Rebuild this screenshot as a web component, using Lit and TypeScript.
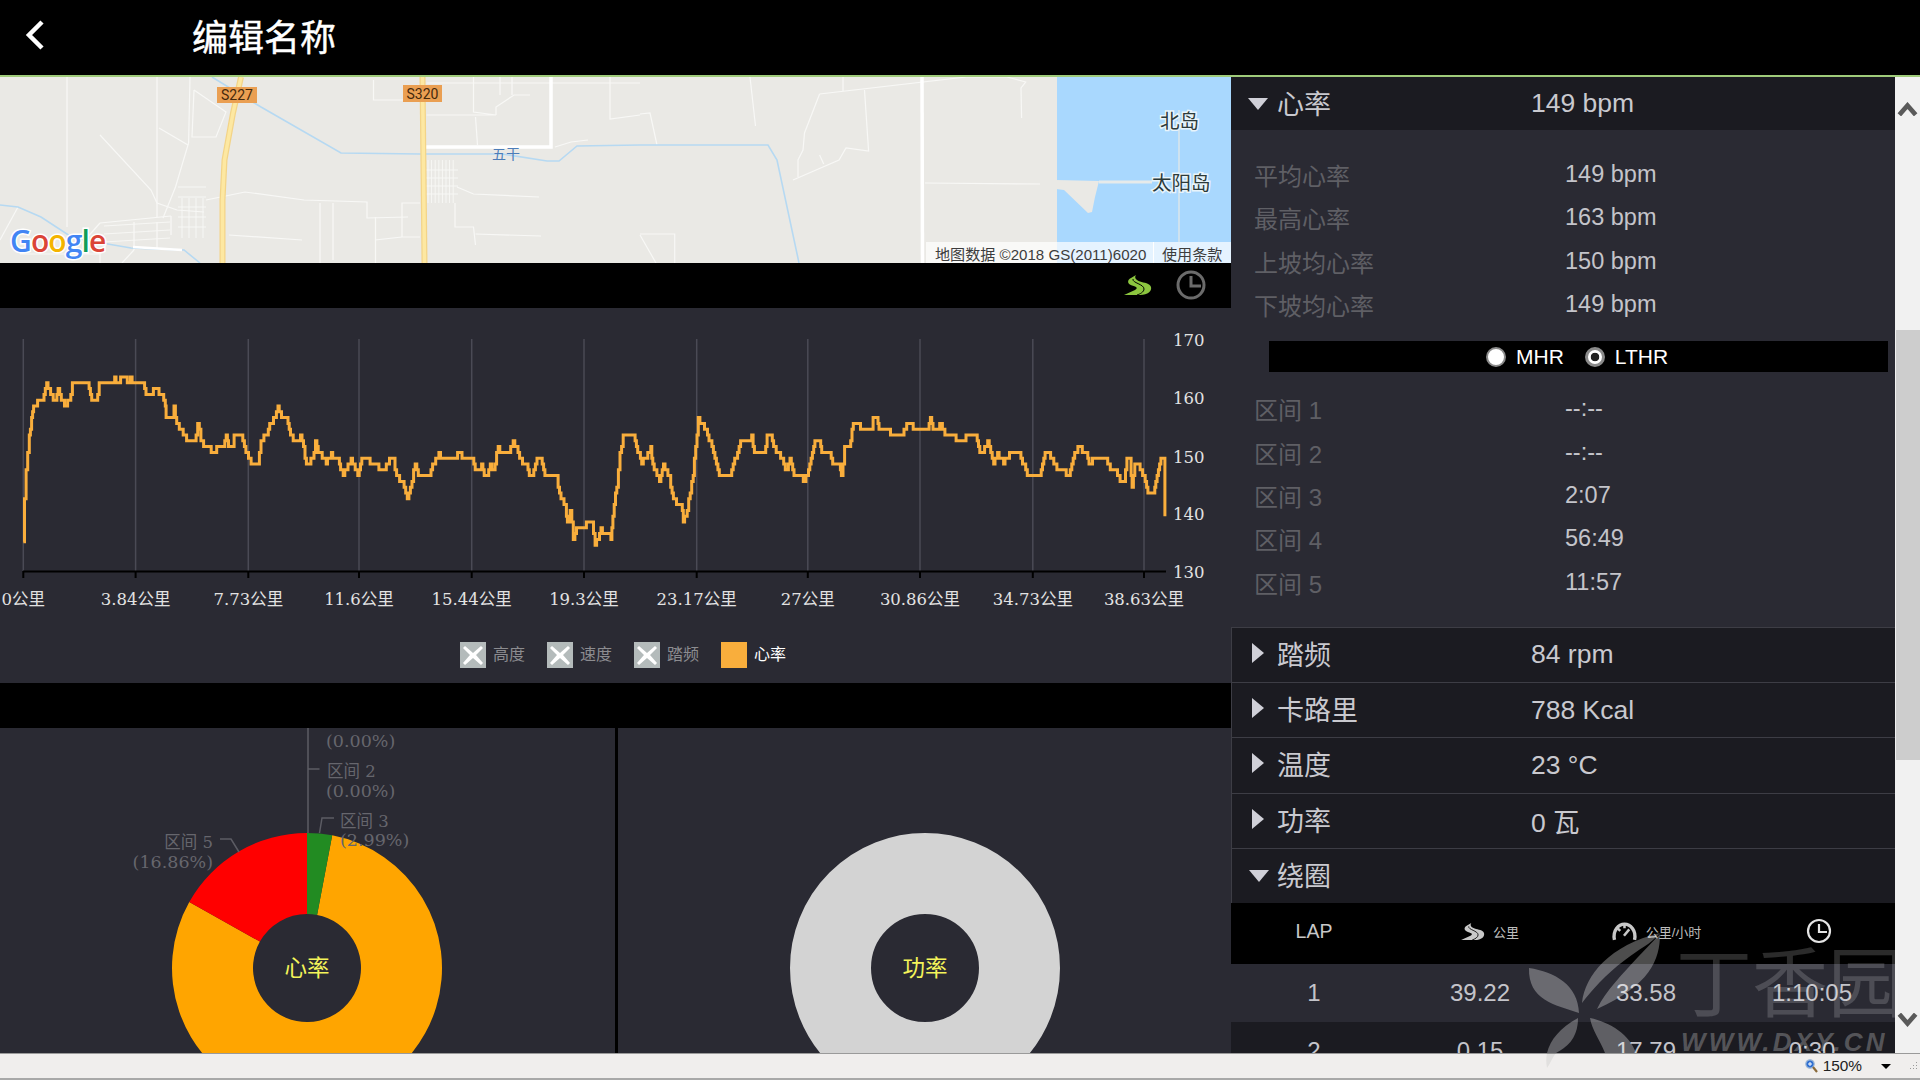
import { LitElement, html, css, svg } from 'lit';
import { customElement } from 'lit/decorators.js';

type Pt = [number, number];

// heart rate trace, read off the reference (left half and right half of the chart)
const traceLeft: Pt[] = [[59,695],[62,560],[66,480],[70,420],[74,370],[80,330],[85,295],[95,275],[108,265],[118,225],[128,250],[138,278],[147,242],[155,265],[163,290],[175,270],[183,225],[222,225],[232,278],[243,278],[251,225],[285,225],[290,208],[300,225],[305,208],[320,208],[322,225],[330,208],[338,225],[362,225],[373,260],[385,258],[388,242],[398,242],[402,260],[410,260],[418,290],[420,315],[438,315],[440,295],[447,340],[460,362],[470,375],[472,400],[492,400],[500,345],[508,385],[515,415],[530,415],[538,435],[548,412],[565,412],[572,378],[578,418],[590,418],[592,380],[610,380],[622,425],[635,455],[652,455],[660,385],[675,380],[682,335],[695,330],[703,290],[712,320],[725,330],[738,380],[745,400],[760,380],[775,455],[790,452],[798,398],[808,430],[825,455],[838,432],[855,452],[868,490],[880,470],[888,450],[905,490],[915,450],[932,450],[936,468],[955,468],[965,485],[985,450],[995,450],[1003,503],[1018,510],[1030,560],[1042,510],[1050,465],[1062,505],[1085,505],[1090,478],[1110,432],[1122,450],[1165,432],[1172,450],[1195,450],[1205,488],[1218,470],[1228,505],[1240,470],[1248,480],[1260,412],[1272,435],[1285,435],[1298,400],[1310,425],[1318,450],[1332,465],[1342,505],[1358,450],[1368,450],[1378,505],[1408,505],[1415,555],[1430,590],[1435,630],[1442,600],[1450,680],[1462,645],[1475,660],[1483,630],[1497,628],[1505,700],[1520,660],[1545,680],[1550,610],[1560,530],[1568,430]];
const traceRight: Pt[] = [[8,382],[35,382],[48,435],[55,455],[78,418],[83,465],[100,515],[110,468],[125,505],[135,570],[155,585],[160,630],[170,600],[185,490],[198,330],[210,340],[225,385],[240,445],[255,503],[275,503],[290,450],[305,395],[333,382],[340,435],[365,435],[372,382],[382,382],[395,425],[410,440],[418,488],[430,450],[440,503],[460,503],[467,522],[480,455],[493,400],[505,400],[510,435],[530,430],[542,468],[555,468],[560,505],[568,415],[580,410],[590,335],[605,345],[615,362],[638,362],[640,330],[650,330],[655,360],[680,365],[688,382],[708,382],[725,347],[738,347],[745,362],[775,362],[785,330],[795,362],[812,345],[825,380],[848,382],[850,400],[870,400],[875,382],[900,382],[910,435],[930,395],[945,455],[955,432],[970,455],[985,432],[1010,432],[1030,490],[1040,505],[1062,505],[1075,432],[1085,432],[1105,480],[1125,480],[1135,505],[1150,430],[1162,412],[1180,432],[1186,465],[1195,450],[1230,450],[1240,475],[1255,485],[1268,520],[1275,520],[1282,450],[1290,450],[1295,535],[1302,455],[1312,465],[1325,505],[1335,552],[1350,552],[1355,510],[1368,450],[1375,450],[1378,625]];

const tracePts: Pt[] = [
  ...traceLeft.map(([x, y]): Pt => [x / 2.529, 310 + y / 3]),
  ...traceRight.map(([x, y]): Pt => [620 + x / 2.529, 310 + y / 3]),
];

// heart rate is whole bpm, so the line is stepped
function stepPath(pts: Pt[]) {
  const q = (y: number) => +(Math.round(y / 5.8) * 5.8).toFixed(1);
  let d = `M${pts[0][0].toFixed(1)} ${pts[0][1].toFixed(1)}`;
  for (let i = 1; i < pts.length; i++) {
    const [x0, y0] = pts[i - 1];
    const [x1, y1] = pts[i];
    const n = Math.max(1, Math.ceil((x1 - x0) / 1.6));
    for (let k = 1; k <= n; k++) {
      const t = k / n;
      d += `H${(x0 + (x1 - x0) * t).toFixed(1)}V${q(y0 + (y1 - y0) * t)}`;
    }
  }
  return d;
}

const ticks: [number, string][] = [
  [23.3, '0公里'], [135.6, '3.84公里'], [248.3, '7.73公里'], [359, '11.6公里'],
  [471.7, '15.44公里'], [584, '19.3公里'], [696.7, '23.17公里'], [807.8, '27公里'],
  [920, '30.86公里'], [1032.8, '34.73公里'], [1144, '38.63公里'],
];
const yTicks: [number, string][] = [[340, '170'], [398, '160'], [457, '150'], [514, '140'], [572, '130']];

const legend = [
  { name: '高度', on: false },
  { name: '速度', on: false },
  { name: '踏频', on: false },
  { name: '心率', on: true },
];

const hrStats = [
  ['平均心率', '149 bpm'], ['最高心率', '163 bpm'], ['上坡均心率', '150 bpm'], ['下坡均心率', '149 bpm'],
];
const zones = [
  ['区间 1', '--:--'], ['区间 2', '--:--'], ['区间 3', '2:07'], ['区间 4', '56:49'], ['区间 5', '11:57'],
];
const groups = [
  ['踏频', '84 rpm'], ['卡路里', '788 Kcal'], ['温度', '23 °C'], ['功率', '0 瓦'],
];
const laps = [
  ['1', '39.22', '33.58', '1:10:05'],
  ['2', '0.15', '17.79', '0:30'],
];

const mapLines: string[] = [
  '67,77 67,227', '157,77 157,217', '100,135 151,190 157,203 177,210 204,212',
  '190,77 188.6,143 175.5,187 163,218', '159,128 188,145', '194,90 226,112 216,137 192,137 194,90',
  '206,200 245,192 304,200 367,202 367,218 408,217', '229,235 302,240', '320,203 320,263', '333,203 333,260',
  '375.5,217 375.5,263', '402,237 402,203 420,203', '375,240 402,237 420,237',
  '457,187 473.5,194 539,197', '455,203 455,227 473.5,227 475.5,245', '475.5,234 541,236',
  '373.5,80 373.5,100 420,100', '426.5,83 640,83', '473.5,77 473.5,112 496,115 426.5,115', '496,115 496,107 514,95 530,95',
  '500,77 500,95', '512,77 512,95', '610,77 610,119 640,115', '588,140 571,142 555,147', '475.5,117 477.5,145',
  '750,77 755.5,126', '819.6,94 966.5,77 1007,77 1025.7,82 1021,88 1021.6,118', '819.6,94 804.5,133 803,150 798,160 798,177',
  '793,180 839,160 846,148 868.6,151 864.5,90', '843,77 843,91', '819.6,155 823.7,164', '640,114 650,113 657,145',
  '925,183 1040,184', '640,234 674.7,234 674.7,263', '640,235 656,263',
  '0,240 18,207', '100,223 171,216', '100,223 85,240', '134,222 134,250', '157,222 157,248', '171,216 171,235',
  '20,254 100,254 100,263', '122,263 134,250',
];

function villageLines() {
  const out: string[] = [];
  for (let x = 428; x <= 456; x += 3.6) out.push(`${x},160 ${x},203`);
  for (let y = 170; y <= 195; y += 8) out.push(`426,${y} 458,${y}`);
  for (let x = 182; x <= 204; x += 7) out.push(`${x},198 ${x},238`);
  for (let y = 187; y <= 236; y += 10) out.push(`178,${y} 206,${y}`);
  for (let y = 226; y <= 246; y += 8) out.push(`104,${y} 170,${y - 4}`);
  return out;
}

// annular sector, angles in degrees clockwise from 12 o'clock
function sector(cx: number, cy: number, r: number, r0: number, a0: number, a1: number) {
  const p = (rad: number, a: number) => {
    const t = (a * Math.PI) / 180;
    return `${(cx + rad * Math.sin(t)).toFixed(2)} ${(cy - rad * Math.cos(t)).toFixed(2)}`;
  };
  const large = a1 - a0 > 180 ? 1 : 0;
  return `M${p(r, a0)}A${r} ${r} 0 ${large} 1 ${p(r, a1)}L${p(r0, a1)}A${r0} ${r0} 0 ${large} 0 ${p(r0, a0)}Z`;
}

const roadD = 'M12 0L7 3C3 5 3 9 8 10.5C13 12 14 13 11 15L0 20H16C24 20 28 16 27 12C26 8 20 8 16 6.5C12 5 10 3 12 0Z';

@customElement('app-root')
export class AppRoot extends LitElement {
  static styles = css`
    :host {
      display: flex;
      flex-direction: column;
      position: relative;
      width: 1920px;
      height: 1080px;
      overflow: hidden;
      background: #000;
      font-family: 'Liberation Sans', 'Noto Sans CJK SC', sans-serif;
      color: #c9c9cf;
    }
    svg { display: block; }

    .topbar {
      flex: none;
      box-sizing: border-box;
      height: 77px;
      border-bottom: 2px solid #9fcb7a;
      display: flex;
      align-items: center;
      padding-left: 25px;
      color: #fff;
    }
    .back { margin-bottom: 5px; }
    .title { margin: 2px 0 0 147px; font-size: 36px; line-height: 40px; -webkit-text-stroke: 0.4px #fff; }

    .main { flex: 1; min-height: 0; display: flex; }
    .left { flex: none; width: 1231px; display: flex; flex-direction: column; }

    .map { flex: none; height: 186px; }
    .map-land { fill: #eae9e5; }
    .map-water { fill: #a9d8fe; }
    .thin { fill: none; stroke: #f8f8f6; stroke-width: 1.2; }
    .fat { fill: none; stroke: #fff; stroke-width: 3.5; }
    .river { fill: none; stroke: #b6d9f2; stroke-width: 1.6; }
    .road-edge { fill: none; stroke: #f3d488; stroke-width: 6; }
    .road-core { fill: none; stroke: #fde8a2; stroke-width: 3.5; }
    .shield { fill: #ea9f52; }
    .shield-text { font: 14px Roboto, sans-serif; fill: #46290c; text-anchor: middle; }
    .island { fill: #eae9e5; }
    .pier { fill: none; stroke: #dbe6ea; stroke-width: 1.5; }
    .place { font-family: 'Noto Sans CJK SC', sans-serif; font-size: 19.5px; fill: #2c3a3a; stroke: #e8f4fb; stroke-width: 3; paint-order: stroke; }
    .place-blue { font-family: 'Noto Sans CJK SC', sans-serif; font-size: 14px; fill: #4c7db9; }
    .attr-bg { fill: #fff; opacity: 0.7; }
    .attr { font-family: 'Liberation Sans', 'Noto Sans CJK SC', sans-serif; font-size: 15.1px; fill: #3d3d3d; }
    .google { font-family: 'Open Sans', sans-serif; font-weight: 600; font-size: 30px; stroke: #fff; stroke-width: 3; paint-order: stroke; letter-spacing: -0.9px; }

    .tools {
      flex: none;
      height: 45px;
      display: flex;
      align-items: center;
      justify-content: flex-end;
      gap: 24px;
      padding: 0 25px 2px 0;
      box-sizing: border-box;
    }

    .chart-panel { flex: none; height: 375px; background: #2a2a33; }
    .grid-line { stroke: #4a4a55; stroke-width: 1.5; }
    .axis { stroke: #000; stroke-width: 2; }
    .trace { fill: none; stroke: #f9ae3c; stroke-width: 3; stroke-linejoin: miter; }
    .chart-text { font-family: 'DejaVu Serif', 'Noto Sans CJK SC', serif; font-size: 16.5px; fill: #e2e2e2; }

    .legend {
      display: flex;
      justify-content: center;
      gap: 22px;
      padding: 12px 0 0 15px;
    }
    .legend-item { display: flex; align-items: center; gap: 7px; font-size: 16px; line-height: 26px; color: #8c8c90; }
    .legend-item.on { color: #fff; }
    .swatch { width: 26px; height: 26px; background: #b4bbbb; }
    .legend-item.on .swatch { background: #f9ae3c; }

    .pies {
      flex: 1;
      min-height: 0;
      margin-top: 45px;
      display: grid;
      grid-template-columns: 615px 613px;
      gap: 3px;
    }
    .pie { background: #2a2a33; overflow: hidden; }
    .pie-label { font-family: 'DejaVu Serif', 'Noto Sans CJK SC', serif; font-size: 16.5px; fill: #66666d; }
    .pie-pct { font-size: 17.5px; }
    .leader { fill: none; stroke: #5c5c64; stroke-width: 1.5; }
    .pie-name { font-family: 'Noto Sans CJK SC', sans-serif; font-size: 22.5px; fill: #f4f45a; text-anchor: middle; dominant-baseline: central; }

    .side { flex: none; width: 664px; height: 100%; overflow: hidden; background: #2a2a33; }
    .group {
      box-sizing: border-box;
      height: 55.3px;
      display: grid;
      grid-template-columns: 45px 254px 1fr;
      align-items: center;
      background: #1b1b21;
      border-top: 1.5px solid #3d3d45;
      border-left: 1px solid #3d3d45;
      font-size: 26.5px;
      color: #c9c9cf;
    }
    .group.first { height: 53px; border: none; grid-template-columns: 46px 254px 1fr; }
    .arrow-down {
      width: 0; height: 0; margin-left: 17px;
      border-left: 10.5px solid transparent;
      border-right: 10.5px solid transparent;
      border-top: 12px solid #d0d0d8;
    }
    .arrow-right {
      width: 0; height: 0; margin-left: 20px; margin-top: -4px;
      border-top: 10.5px solid transparent;
      border-bottom: 10.5px solid transparent;
      border-left: 12px solid #d0d0d8;
    }
    .name { font-size: 27px; margin-top: -3px; }

    .stats { padding: 23px 0 0; }
    .zones { padding: 15px 0 23px; }
    .stat {
      height: 43.3px;
      display: grid;
      grid-template-columns: 311px 1fr;
      align-items: center;
      padding-left: 23px;
      box-sizing: border-box;
    }
    .stat-label { font-size: 24px; color: #5f5f65; }
    .stat-value { font-size: 23.5px; color: #c4c4ca; }

    .hr-mode {
      height: 31px;
      margin: 15px 7px 0 38px;
      background: #000;
      color: #fff;
      display: flex;
      align-items: center;
      font-size: 21px;
      padding-left: 217px;
    }
    .radio { box-sizing: border-box; width: 20px; height: 20px; border-radius: 50%; border: 2px solid #8a8a8a; background: #fff; margin-right: 10px; }
    .radio.sel { border-width: 3px; background: radial-gradient(circle, #222 0 4px, #fff 4.6px); }
    .mode-name { margin-right: 21px; }

    .lap-grid { display: grid; grid-template-columns: repeat(4, 166px); align-items: center; text-align: center; }
    .lap-head { height: 61px; background: #000; color: #c8c8c8; font-size: 19.5px; }
    .lap-head > div { display: flex; align-items: center; justify-content: center; margin-top: -5px; }
    .unit { font-size: 13px; margin-left: 8px; color: #bdbdbd; }
    .shift { padding-left: 20px; }
    .shift-s { padding-left: 14px; }
    .lap-row { height: 58px; font-size: 24px; color: #c4c4ca; background: #2a2a33; }
    .lap-row.alt { background: #1b1b21; }

    .scrollbar { flex: none; width: 25px; background: #f1f1f1; display: flex; flex-direction: column; }
    .sb-btn { flex: none; display: flex; align-items: center; justify-content: center; }
    .sb-up { height: 64px; }
    .sb-down { height: 66px; margin-top: auto; }
    .sb-thumb { flex: none; height: 430px; margin: 189px 0 0 1px; background: #cdcdcd; }
    .chev { fill: none; stroke: #5a5a5a; stroke-width: 4; }

    .status {
      flex: none;
      box-sizing: border-box;
      height: 27px;
      border-top: 1px solid #9a9a9a;
      border-bottom: 2px solid #a8a8a8;
      background: #f0eeed;
      display: flex;
      align-items: center;
      justify-content: flex-end;
      color: #222;
      font-size: 15.4px;
    }
    .zoom-level { margin: 0 19px 0 5px; }
    .zoom-caret { width: 0; height: 0; border-left: 5px solid transparent; border-right: 5px solid transparent; border-top: 5px solid #000; margin-right: 19px; }
    .grip { margin-right: 2px; }

    .watermark { position: absolute; left: 1500px; top: 920px; pointer-events: none; }
    .wm-petal { fill: #fff; fill-opacity: 0.3; }
    .wm-tail { fill: #fff; fill-opacity: 0.3; }
    .wm-cn { font-family: 'Noto Sans CJK SC', sans-serif; font-size: 76px; fill: #fff; fill-opacity: 0.17; }
    .wm-en { font: italic bold 26px 'Liberation Sans', sans-serif; fill: #fff; fill-opacity: 0.26; letter-spacing: 3.2px; }
  `;

  private renderMap() {
    return html`
      <svg class="map" width="1231" height="186" viewBox="0 77 1231 186">
        <rect class="map-land" x="0" y="77" width="1231" height="186"></rect>
        <rect class="map-water" x="1057" y="77" width="174" height="186"></rect>
        <polygon class="island" points="1056,180 1099,181 1095,197 1092,212 1088,213 1064,190 1056,189"></polygon>
        <polyline class="pier" style="stroke:#e6eaea;stroke-width:3" points="1099,182 1152,182"></polyline>
        <polyline class="pier" points="1179,110 1179,242"></polyline>
        ${villageLines().map((p) => svg`<polyline class="thin" style="stroke-width:0.9" points=${p}></polyline>`)}
        ${mapLines.map((p) => svg`<polyline class="thin" points=${p}></polyline>`)}
        <polyline class="river" points="212,77 261,107 341,153 420,154 502,154 547,161 559,161 577,146 640,145 768,145 777,160 799,263"></polyline>
        <polyline class="river" points="0,205 18,207 41,217 73,238 131,248 184,250 200,263"></polyline>
        <polyline class="fat" points="551,77 551,147 424,147"></polyline>
        <polyline class="fat" points="922,77 922.5,263"></polyline>
        <polyline class="fat" style="stroke-width:2.5" points="133,247 182,250"></polyline>
        <polyline class="road-edge" points="241,77 233,113 224.5,160 222.5,200 222.5,263"></polyline>
        <polyline class="road-core" points="241,77 233,113 224.5,160 222.5,200 222.5,263"></polyline>
        <polyline class="road-edge" points="422.5,77 424.5,263"></polyline>
        <polyline class="road-core" points="422.5,77 424.5,263"></polyline>
        <rect class="shield" x="217" y="87" width="40" height="16"></rect>
        <text class="shield-text" x="237" y="100">S227</text>
        <rect class="shield" x="403" y="85" width="39" height="17"></rect>
        <text class="shield-text" x="422.5" y="98.5">S320</text>
        <text class="place-blue" x="492" y="159">五干</text>
        <text class="place" x="1160" y="128">北岛</text>
        <text class="place" x="1152" y="190">太阳岛</text>
        <text class="google" x="10" y="252">
          <tspan fill="#4285f4">G</tspan><tspan fill="#db4437">o</tspan><tspan fill="#f4b400">o</tspan><tspan fill="#4285f4">g</tspan><tspan fill="#0f9d58">l</tspan><tspan fill="#db4437">e</tspan>
        </text>
        <rect class="attr-bg" x="926" y="242" width="305" height="21"></rect>
        <rect x="1153" y="242" width="1" height="21" fill="#fff"></rect>
        <text class="attr" x="935" y="260">地图数据 ©2018 GS(2011)6020</text>
        <text class="attr" x="1162" y="260">使用条款</text>
      </svg>
    `;
  }

  private renderChart() {
    return html`
      <svg width="1231" height="322" viewBox="0 308 1231 322">
        ${ticks.map(([x]) => svg`<line class="grid-line" x1=${x} x2=${x} y1="339" y2="571"></line>`)}
        <line class="axis" x1="23" x2="1166" y1="571.5" y2="571.5"></line>
        ${ticks.map(([x]) => svg`<line class="axis" x1=${x} x2=${x} y1="571" y2="578"></line>`)}
        <path class="trace" d=${stepPath(tracePts)}></path>
        ${ticks.map(([x, t]) => svg`<text class="chart-text" x=${x} y="605" text-anchor="middle">${t}</text>`)}
        ${yTicks.map(([y, t]) => svg`<text class="chart-text" x="1173" y=${y + 6}>${t}</text>`)}
      </svg>
      <div class="legend">
        ${legend.map((l) => html`
          <div class="legend-item ${l.on ? 'on' : ''}">
            <div class="swatch">
              ${l.on ? '' : html`<svg width="26" height="26" viewBox="0 0 26 26"><path d="M5 4L13 11L21 4L23 6L16 13L23 21L21 23L13 16L5 23L3 21L10 13L3 6Z" fill="#fff"></path></svg>`}
            </div>
            <span>${l.name}</span>
          </div>
        `)}
      </div>
    `;
  }

  private renderPies() {
    return html`
      <div class="pies">
        <div class="pie">
          <svg width="615" height="325" viewBox="0 728 615 325">
            <path d=${sector(307, 968, 135, 54, 10.76, 299.3)} fill="#ffa500"></path>
            <path d=${sector(307, 968, 135, 54, 299.3, 360)} fill="#ff0000"></path>
            <path d=${sector(307, 968, 135, 54, 0, 10.76)} fill="#228b22"></path>
            <polyline class="leader" points="308,728 308,833"></polyline>
            <polyline class="leader" points="308,769 319.5,769"></polyline>
            <polyline class="leader" points="334,818 322,818 319.5,833"></polyline>
            <polyline class="leader" points="220,839 231,839 239,852"></polyline>
            <text class="pie-label pie-pct" x="326" y="747">(0.00%)</text>
            <text class="pie-label" x="327" y="777">区间 2</text>
            <text class="pie-label pie-pct" x="326" y="797">(0.00%)</text>
            <text class="pie-label" x="340" y="827">区间 3</text>
            <text class="pie-label pie-pct" x="340" y="846">(2.99%)</text>
            <text class="pie-label" x="213" y="848" text-anchor="end">区间 5</text>
            <text class="pie-label pie-pct" x="213" y="868" text-anchor="end">(16.86%)</text>
            <text class="pie-name" x="307" y="966">心率</text>
          </svg>
        </div>
        <div class="pie">
          <svg width="613" height="325" viewBox="618 728 613 325">
            <circle cx="925" cy="968" r="94.5" fill="none" stroke="#d3d3d3" stroke-width="81"></circle>
            <text class="pie-name" x="925" y="966">功率</text>
          </svg>
        </div>
      </div>
    `;
  }

  private renderSide() {
    return html`
      <div class="side">
        <div class="group first">
          <div class="arrow-down"></div><div class="name">心率</div><div>149 bpm</div>
        </div>
        <div class="stats">
          ${hrStats.map(([k, v]) => html`<div class="stat"><div class="stat-label">${k}</div><div class="stat-value">${v}</div></div>`)}
        </div>
        <div class="hr-mode">
          <div class="radio"></div><span class="mode-name">MHR</span>
          <div class="radio sel"></div><span>LTHR</span>
        </div>
        <div class="zones">
          ${zones.map(([k, v]) => html`<div class="stat"><div class="stat-label">${k}</div><div class="stat-value">${v}</div></div>`)}
        </div>
        ${groups.map(([k, v]) => html`
          <div class="group"><div class="arrow-right"></div><div class="name">${k}</div><div>${v}</div></div>
        `)}
        <div class="group"><div class="arrow-down"></div><div class="name">绕圈</div><div></div></div>
        <div class="lap-grid lap-head">
          <div>LAP</div>
          <div class="shift">
            <svg width="24" height="17" viewBox="0 0 28 20">
              <path d=${roadD} fill="#c8c8c8"></path>
              <path d="M9 4C8 8 20 9 20 14C20 17 16 19 13 20" fill="none" stroke="#000" stroke-width="1"></path>
            </svg>
            <span class="unit">公里</span>
          </div>
          <div class="shift">
            <svg width="27" height="19" viewBox="0 0 25 18">
              <path d="M3 17C1 8 7 2 12.5 2C18 2 24 8 22 17" fill="none" stroke="#c8c8c8" stroke-width="3.2"></path>
              <path d="M12.5 2V6M6 6L8.5 8.5M12 13L17 7" fill="none" stroke="#c8c8c8" stroke-width="2.4"></path>
            </svg>
            <span class="unit">公里/小时</span>
          </div>
          <div class="shift-s">
            <svg width="26" height="26" viewBox="0 0 26 26">
              <circle cx="13" cy="13" r="11" fill="none" stroke="#e4e4e4" stroke-width="2.2"></circle>
              <path d="M13 6V14H21" fill="none" stroke="#e4e4e4" stroke-width="2.2"></path>
            </svg>
          </div>
        </div>
        ${laps.map((row, i) => html`
          <div class="lap-grid lap-row ${i % 2 ? 'alt' : ''}">${row.map((c) => html`<div>${c}</div>`)}</div>
        `)}
      </div>
    `;
  }

  render() {
    return html`
      <div class="topbar">
        <svg class="back" width="20" height="30" viewBox="0 0 20 30">
          <polyline points="17,2 4,15 17,28" fill="none" stroke="#fff" stroke-width="4.5"></polyline>
        </svg>
        <div class="title">编辑名称</div>
      </div>
      <div class="main">
        <div class="left">
          ${this.renderMap()}
          <div class="tools">
            <svg width="28" height="20" viewBox="0 0 28 20">
              <path d=${roadD} fill="#8cc63f"></path>
              <path d="M9 4C8 8 20 9 20 14C20 17 16 19 13 20" fill="none" stroke="#000" stroke-width="1"></path>
            </svg>
            <svg width="30" height="30" viewBox="0 0 30 30">
              <circle cx="15" cy="15" r="13" fill="none" stroke="#6b6b6b" stroke-width="3"></circle>
              <path d="M15 6V16H25" fill="none" stroke="#6b6b6b" stroke-width="3"></path>
            </svg>
          </div>
          <div class="chart-panel">${this.renderChart()}</div>
          ${this.renderPies()}
        </div>
        ${this.renderSide()}
        <div class="scrollbar">
          <div class="sb-btn sb-up"><svg width="21" height="14" viewBox="0 0 18 12"><polyline class="chev" points="2,11 9,3 16,11"></polyline></svg></div>
          <div class="sb-thumb"></div>
          <div class="sb-btn sb-down"><svg width="21" height="14" viewBox="0 0 18 12"><polyline class="chev" points="2,1 9,9 16,1"></polyline></svg></div>
        </div>
      </div>
      <div class="status">
        <svg width="13" height="14" viewBox="0 0 13 14">
          <circle cx="5" cy="5" r="4.2" fill="#2f6fd0" stroke="#9db8d8" stroke-width="1.2"></circle>
          <path d="M3 5H7M5 3V7" stroke="#fff" stroke-width="1"></path>
          <path d="M8 8L12 13" stroke="#8a6a3a" stroke-width="2.2"></path>
        </svg>
        <span class="zoom-level">150%</span>
        <div class="zoom-caret"></div>
        <svg class="grip" width="8" height="12" viewBox="0 0 8 12">
          <path d="M6 2h1v1H6zM3 5h1v1H3zM6 5h1v1H6zM0 8h1v1H0zM3 8h1v1H3zM6 8h1v1H6z" fill="#9a9a9a"></path>
        </svg>
      </div>
      <svg class="watermark" width="420" height="160" viewBox="1500 920 420 160">
        <path class="wm-petal" d="M1582 1003C1585 975 1610 945 1660 933C1650 945 1640 948 1625 960C1605 975 1592 990 1582 1003Z"></path>
        <path class="wm-petal" d="M1597 1009C1606 990 1622 975 1638 957L1660 934C1660 960 1650 985 1597 1009Z"></path>
        <path class="wm-petal" d="M1579 1013C1555 1005 1528 1000 1529 968C1555 972 1578 985 1579 1013Z"></path>
        <path class="wm-petal" d="M1578 1018C1578 1040 1565 1048 1556 1053L1547 1053C1550 1040 1560 1028 1578 1018Z"></path>
        <path class="wm-tail" style="fill:#000;fill-opacity:0.06" d="M1556 1053C1552 1058 1550 1064 1547 1068C1546 1063 1546 1058 1547 1053Z"></path>
        <path class="wm-petal" d="M1590 1018C1610 1022 1630 1035 1636 1053L1605 1053C1600 1040 1592 1030 1590 1018Z"></path>
        <text class="wm-cn" x="1676" y="1011">丁香园</text>
        <text class="wm-en" x="1681" y="1051">WWW.DXY.CN</text>
      </svg>
    `;
  }
}
